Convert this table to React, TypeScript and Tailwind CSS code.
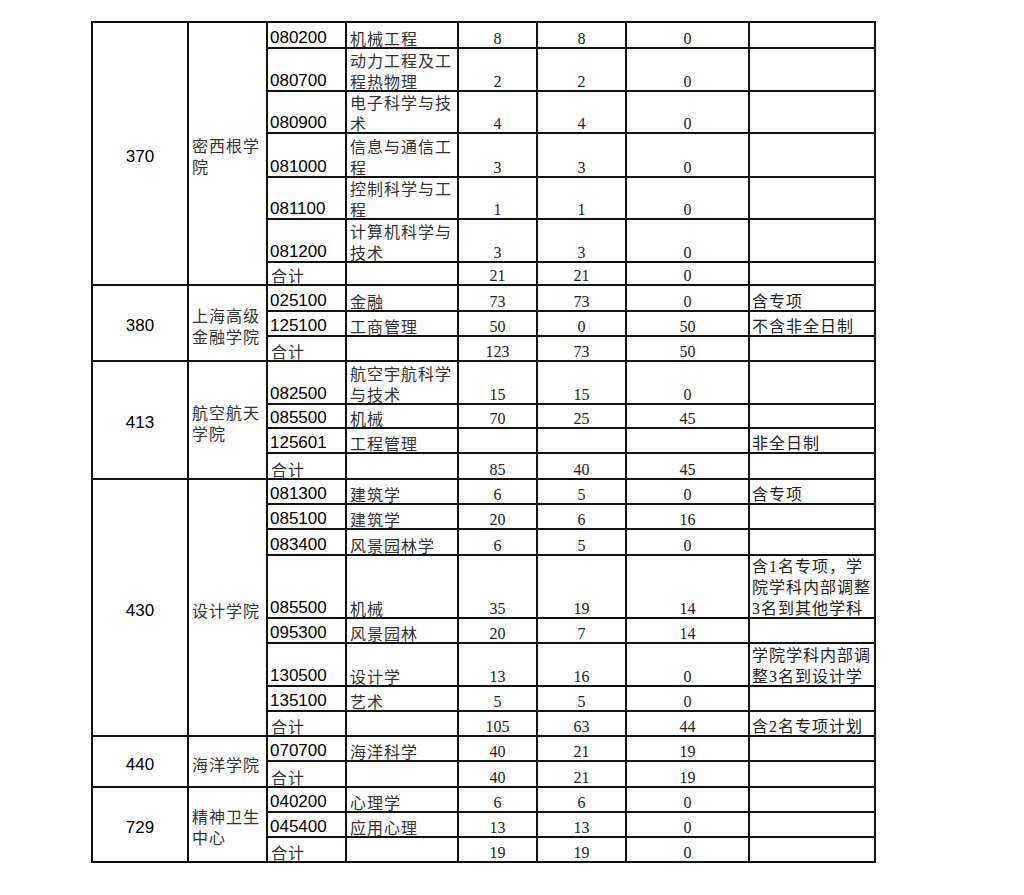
import React from 'react';

type Row = {
  code: string;
  name: string[];
  a: string;
  b: string;
  c: string;
  note: string[];
};

type Group = {
  id: string;
  college: string[];
  span: string;
  rows: Row[];
};

const r = (
  code: string,
  name: string[],
  a: string,
  b: string,
  c: string,
  note: string[] = [],
): Row => ({ code, name, a, b, c, note });

const groups: Group[] = [
  {
    id: '370',
    college: ['密西根学', '院'],
    span: 'row-span-7',
    rows: [
      r('080200', ['机械工程'], '8', '8', '0'),
      r('080700', ['动力工程及工', '程热物理'], '2', '2', '0'),
      r('080900', ['电子科学与技', '术'], '4', '4', '0'),
      r('081000', ['信息与通信工', '程'], '3', '3', '0'),
      r('081100', ['控制科学与工', '程'], '1', '1', '0'),
      r('081200', ['计算机科学与', '技术'], '3', '3', '0'),
      r('合计', [], '21', '21', '0'),
    ],
  },
  {
    id: '380',
    college: ['上海高级', '金融学院'],
    span: 'row-span-3',
    rows: [
      r('025100', ['金融'], '73', '73', '0', ['含专项']),
      r('125100', ['工商管理'], '50', '0', '50', ['不含非全日制']),
      r('合计', [], '123', '73', '50'),
    ],
  },
  {
    id: '413',
    college: ['航空航天', '学院'],
    span: 'row-span-4',
    rows: [
      r('082500', ['航空宇航科学', '与技术'], '15', '15', '0'),
      r('085500', ['机械'], '70', '25', '45'),
      r('125601', ['工程管理'], '', '', '', ['非全日制']),
      r('合计', [], '85', '40', '45'),
    ],
  },
  {
    id: '430',
    college: ['设计学院'],
    span: 'row-span-8',
    rows: [
      r('081300', ['建筑学'], '6', '5', '0', ['含专项']),
      r('085100', ['建筑学'], '20', '6', '16'),
      r('083400', ['风景园林学'], '6', '5', '0'),
      r('085500', ['机械'], '35', '19', '14', [
        '含1名专项，学',
        '院学科内部调整',
        '3名到其他学科',
      ]),
      r('095300', ['风景园林'], '20', '7', '14'),
      r('130500', ['设计学'], '13', '16', '0', [
        '学院学科内部调',
        '整3名到设计学',
      ]),
      r('135100', ['艺术'], '5', '5', '0'),
      r('合计', [], '105', '63', '44', ['含2名专项计划']),
    ],
  },
  {
    id: '440',
    college: ['海洋学院'],
    span: 'row-span-2',
    rows: [
      r('070700', ['海洋科学'], '40', '21', '19'),
      r('合计', [], '40', '21', '19'),
    ],
  },
  {
    id: '729',
    college: ['精神卫生', '中心'],
    span: 'row-span-3',
    rows: [
      r('040200', ['心理学'], '6', '6', '0'),
      r('045400', ['应用心理'], '13', '13', '0'),
      r('合计', [], '19', '19', '0'),
    ],
  },
];

const cell = 'border-r-2 border-b-2 border-[#111] overflow-hidden';
const cjk = "font-['Noto_Sans_CJK_SC',sans-serif] text-[16px] tracking-[1px] leading-[21px] text-[#333]";
const num = "font-['Liberation_Serif','Times_New_Roman',serif] text-[16px] leading-[18px] text-[#222]";
const note = "font-['Liberation_Serif','Noto_Sans_CJK_SC',serif] text-[16px] tracking-[1px] leading-[21px] text-[#222]";

function Lines({ lines }: { lines: string[] }) {
  return (
    <>
      {lines.map((line) => (
        <div key={line} className="whitespace-nowrap">
          {line}
        </div>
      ))}
    </>
  );
}

function NumberCell({ value }: { value: string }) {
  return (
    <div className={`${cell} flex flex-col justify-end text-center ${num}`}>
      <div className="translate-y-[1px]">{value}</div>
    </div>
  );
}

export default function App() {
  return (
    <div className="min-h-[895px] bg-white pl-[91px] pt-[21px]">
      <div className="grid w-[785px] grid-cols-[96px_79px_79px_112px_79px_89px_123px_126px] grid-rows-[26px_43px_42px_44px_42px_43px_23px_26px_25px_25px_43px_24px_25px_26px_25px_25px_26px_63px_25px_43px_25px_25px_25px_26px_25px_25px_25px] border-l-2 border-t-2 border-[#111]">
        {groups.map((group) => (
          <React.Fragment key={group.id}>
            <div
              className={`${group.span} ${cell} flex items-center justify-center pt-[6px] font-['Liberation_Sans',Arial,sans-serif] text-[17px] text-black`}
            >
              {group.id}
            </div>
            <div
              className={`${group.span} ${cell} flex flex-col justify-center pl-[3px] pt-[5px] ${cjk}`}
            >
              <Lines lines={group.college} />
            </div>
            {group.rows.map((row, i) => {
              const isTotal = row.code === '合计';
              return (
                <React.Fragment key={`${group.id}-${i}`}>
                  {isTotal ? (
                    <div className={`${cell} flex flex-col justify-end pl-[3px] ${cjk}`}>
                      <div className="translate-y-[2px]">合计</div>
                    </div>
                  ) : (
                    <div
                      className={`${cell} flex flex-col justify-end pl-[2px] font-['Liberation_Sans',Arial,sans-serif] text-[17px] leading-[20px] text-black`}
                    >
                      <div className="translate-y-[1px]">{row.code}</div>
                    </div>
                  )}
                  <div className={`${cell} flex flex-col justify-end pl-[3px] ${cjk}`}>
                    <div className="translate-y-[2px]">
                      <Lines lines={row.name} />
                    </div>
                  </div>
                  <NumberCell value={row.a} />
                  <NumberCell value={row.b} />
                  <NumberCell value={row.c} />
                  <div className={`${cell} flex flex-col justify-end pl-[2px] ${note}`}>
                    <div className="translate-y-[2px]">
                      <Lines lines={row.note} />
                    </div>
                  </div>
                </React.Fragment>
              );
            })}
          </React.Fragment>
        ))}
      </div>
    </div>
  );
}
